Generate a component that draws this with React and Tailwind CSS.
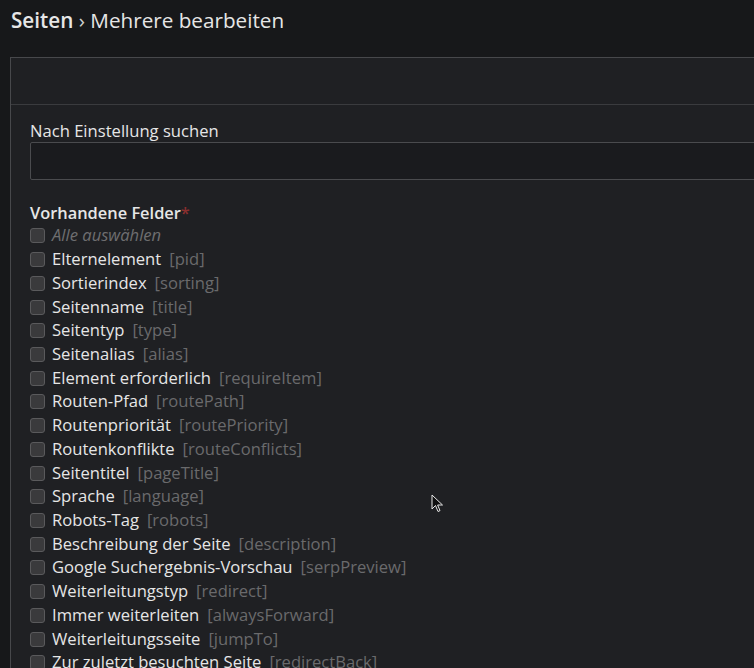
const fields = [
  ["Elternelement", "pid"],
  ["Sortierindex", "sorting"],
  ["Seitenname", "title"],
  ["Seitentyp", "type"],
  ["Seitenalias", "alias"],
  ["Element erforderlich", "requireItem"],
  ["Routen-Pfad", "routePath"],
  ["Routenpriorität", "routePriority"],
  ["Routenkonflikte", "routeConflicts"],
  ["Seitentitel", "pageTitle"],
  ["Sprache", "language"],
  ["Robots-Tag", "robots"],
  ["Beschreibung der Seite", "description"],
  ["Google Suchergebnis-Vorschau", "serpPreview"],
  ["Weiterleitungstyp", "redirect"],
  ["Immer weiterleiten", "alwaysForward"],
  ["Weiterleitungsseite", "jumpTo"],
  ["Zur zuletzt besuchten Seite", "redirectBack"],
];

function Box() {
  return <span className="mr-[7px] h-[15px] w-[15px] shrink-0 rounded-[3px] border border-[#5a5a5c] bg-[#3a3a3c]" />;
}

export default function App() {
  return (
    <div
      className="relative h-[668px] w-[754px] overflow-hidden bg-[#17181a] text-[#e6e6e6]"
      style={{ fontFamily: '"Open Sans", "Noto Sans", sans-serif' }}
    >
      {/* Title */}
      <h1 className="h-[57px] pl-[11px] pt-[5px] text-[20.7px] leading-[30px]">
        <span className="font-semibold">Seiten</span>
        <span className="text-[#cfcfcf]"> › </span>
        Mehrere bearbeiten
      </h1>

      {/* Panel */}
      <div className="ml-[10px] w-[760px] border border-r-0 border-[#47484b] bg-[#1f2023]">
        <div className="h-[47px] border-b border-[#3a3b3e]" />
        <div className="pl-[19px] pt-[15px]">
          <label className="block text-[16.6px] leading-[22px]">Nach Einstellung suchen</label>
          <div className="h-[38px] rounded-[2px] border border-[#4a4b4e] bg-[#1a1b1e]" />

          <div className="mt-[22px] text-[16.4px] font-semibold leading-[22px]">
            Vorhandene Felder<span className="text-[#8a2f2f]">*</span>
          </div>

          <ul className="text-[16.6px]">
            <li className="flex h-[23.72px] items-center">
              <Box />
              <span className="italic text-[#6e6e70]">Alle auswählen</span>
            </li>
            {fields.map(([label, key]) => (
              <li key={key} className="flex h-[23.72px] items-center whitespace-nowrap">
                <Box />
                <span>{label}</span>
                <span className="ml-[8px] text-[#6a6a6c]">[{key}]</span>
              </li>
            ))}
          </ul>
        </div>
      </div>

      {/* mouse cursor */}
      <svg className="absolute left-[431px] top-[494px]" width="13" height="20" viewBox="0 0 13 20">
        <path d="M1 1 L1 15 L4.5 11.5 L7 17.5 L9 16.6 L6.6 11 L11.5 11 Z" fill="#111" stroke="#e8e8e8" strokeWidth="1" />
      </svg>
    </div>
  );
}
